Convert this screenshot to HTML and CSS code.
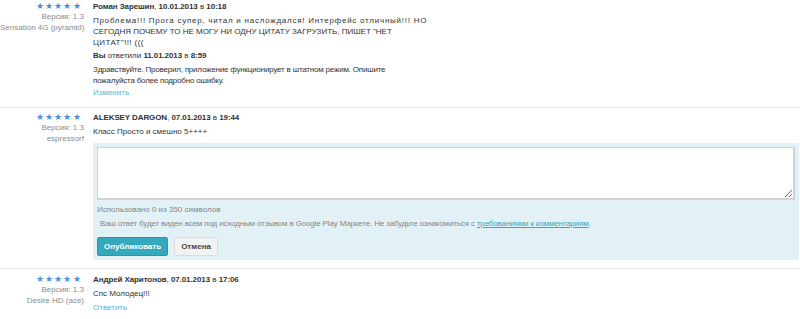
FILE: index.html
```html
<!DOCTYPE html>
<html lang="ru">
<head>
    <meta charset="UTF-8">
    <title>Отзывы</title>
    <link rel="stylesheet" href="styles.css">
</head>
<body>
    <div class="review first">
        <div class="meta">
            <div class="stars">★★★★★</div>
            <div>Версия: 1.3</div>
            <div>Sensation 4G (pyramid)</div>
        </div>
        <div class="content">
            <div class="author"><b>Роман Зарешин</b>, <b>10.01.2013</b> в <b>10:18</b></div>
            <p class="text"><span class="wide">Проблема!!! Прога супер, читал и наслождался! Интерфейс отличный!!! НО</span><br>СЕГОДНЯ ПОЧЕМУ ТО НЕ МОГУ НИ ОДНУ ЦИТАТУ ЗАГРУЗИТЬ, ПИШЕТ "НЕТ<br><span class="semi">ЦИТАТ"!!! (((</span></p>
            <div class="author answer"><b>Вы</b> ответили <b>11.01.2013</b> в <b>8:59</b></div>
            <p class="text reply">Здравствуйте. Проверил, приложение функционирует в штатном режим. Опишите<br>пожалуйста более подробно ошибку.</p>
            <a class="action" href="#">Изменить</a>
        </div>
    </div>

    <div class="review">
        <div class="meta">
            <div class="stars">★★★★★</div>
            <div>Версия: 1.3</div>
            <div>espressorf</div>
        </div>
        <div class="content">
            <div class="author"><b>ALEKSEY DARGON</b>, <b>07.01.2013</b> в <b>19:44</b></div>
            <p class="text">Класс Просто и смешно 5++++</p>
            <div class="answer-box">
                <textarea class="answer-input"></textarea>
                <div class="counter">Использовано 0 из 350 символов</div>
                <div class="notice">Ваш ответ будет виден всем под исходным отзывом в Google Play Маркете. Не забудьте ознакомиться с <a href="#">требованиями к комментариям</a>.</div>
                <div class="buttons">
                    <button class="btn btn-primary">Опубликовать</button>
                    <button class="btn">Отмена</button>
                </div>
            </div>
        </div>
    </div>

    <div class="review last">
        <div class="meta">
            <div class="stars">★★★★★</div>
            <div>Версия: 1.3</div>
            <div>Desire HD (ace)</div>
        </div>
        <div class="content">
            <div class="author"><b>Андрей Харитонов</b>, <b>07.01.2013</b> в <b>17:06</b></div>
            <p class="text">Спс Молодец!!!</p>
            <a class="action" href="#">Ответить</a>
        </div>
    </div>
</body>
</html>
```

FILE: styles.css
```css
body {
    margin: 0;
    font-family: "Liberation Sans", Arial, sans-serif;
    font-size: 8px;
    line-height: 11px;
    color: #333;
    background: #fff;
}
.review {
    display: flex;
    padding: 4px 0 8px;
    border-bottom: 1px solid #e6e6e6;
}
.review.first {
    padding-top: 1px;
    padding-bottom: 9px;
}
.review.last {
    padding-top: 5px;
}
.meta {
    width: 84px;
    flex-shrink: 0;
    text-align: right;
    white-space: nowrap;
    color: #8c8c8c;
    font-size: 8px;
    line-height: 10.5px;
}
.stars {
    color: #4a90d9;
    font-size: 8.5px;
    line-height: 11px;
    letter-spacing: 1.3px;
    margin-right: 2px;
}
.content {
    flex: 1;
    padding-left: 9px;
    padding-right: 1px;
}
.author {
    color: #333;
    margin-bottom: 3px;
}
.author b {
    letter-spacing: -0.1px;
}
.answer {
    margin-top: 2px;
}
.text {
    margin: 0;
}
.text .wide {
    letter-spacing: 0.75px;
}
.text .semi {
    letter-spacing: 0.4px;
}
.reply {
    margin-top: 2px;
    letter-spacing: -0.2px;
}
.action {
    display: block;
    margin-top: 1px;
    color: #5ab5cf;
    text-decoration: none;
}
.last .action {
    margin-top: 3px;
}
.answer-box {
    background-color: #e2f1f5;
    margin-top: 6px;
    padding: 4px 4px 4px;
}
.answer-input {
    display: block;
    box-sizing: border-box;
    width: 100%;
    height: 53px;
    margin: 0;
    border: 2px solid #cfd3d4;
    border-top-width: 1px;
    border-left-width: 1px;
    background: #fff;
    resize: vertical;
}
.counter {
    color: #888;
    margin-top: 4px;
}
.notice {
    color: #888;
    margin-top: 3px;
    padding-left: 3px;
    letter-spacing: -0.15px;
}
.notice a {
    color: #3aa6c2;
}
.buttons {
    display: flex;
    gap: 6px;
    margin-top: 8px;
}
.btn {
    font-family: "Liberation Sans", Arial, sans-serif;
    font-size: 8px;
    font-weight: bold;
    height: 19px;
    padding: 0 6px;
    border: 1px solid #dcdcdc;
    border-radius: 2px;
    background: #f3f3f3;
    color: #444;
}
.btn-primary {
    background: #34a8bc;
    border-color: #2b97a9;
    color: #fff;
}
```
